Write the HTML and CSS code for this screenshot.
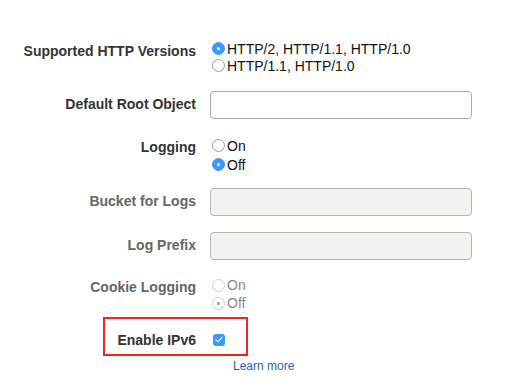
FILE: index.html
```html
<!DOCTYPE html>
<html lang="en">
<head>
  <meta charset="UTF-8" />
  <title>Distribution Settings</title>
  <link rel="stylesheet" href="styles.css">
</head>
<body>
  <form class="settings">
    <div class="row row-http">
      <label class="field-label">Supported HTTP Versions</label>
      <div class="choices">
        <label class="choice"><input type="radio" name="http" checked>HTTP/2, HTTP/1.1, HTTP/1.0</label>
        <label class="choice"><input type="radio" name="http">HTTP/1.1, HTTP/1.0</label>
      </div>
    </div>

    <div class="row row-input row-root">
      <label class="field-label">Default Root Object</label>
      <input class="text-input" type="text">
    </div>

    <div class="row row-logging">
      <label class="field-label">Logging</label>
      <div class="choices tall">
        <label class="choice"><input type="radio" name="logging">On</label>
        <label class="choice"><input type="radio" name="logging" checked>Off</label>
      </div>
    </div>

    <div class="row row-input row-bucket">
      <label class="field-label muted">Bucket for Logs</label>
      <input class="text-input" type="text" disabled>
    </div>

    <div class="row row-input row-prefix">
      <label class="field-label muted">Log Prefix</label>
      <input class="text-input" type="text" disabled>
    </div>

    <div class="row row-cookie">
      <label class="field-label muted">Cookie Logging</label>
      <div class="choices mid">
        <label class="choice disabled"><input type="radio" name="cookie" disabled>On</label>
        <label class="choice disabled"><input type="radio" name="cookie" checked disabled>Off</label>
      </div>
    </div>

    <div class="highlight">
      <label class="field-label">Enable IPv6</label>
      <input class="check" type="checkbox" checked>
    </div>

    <a class="learn-more" href="#">Learn more</a>
  </form>
</body>
</html>
```

FILE: styles.css
```css
:root {
  --label-color: #333;
  --muted-label: #666;
  --text-color: #111;
  --blue: #3b99fc;
  --border: #a9a9a9;
  --disabled-bg: #f3f2ef;
  --red: #ee2420;
  --link: #2a5fb4;
}
html, body {
  margin: 0;
  padding: 0;
  background: #fff;
  font-family: 'Liberation Sans', Arial, sans-serif;
  color: var(--text-color);
}
.settings {
  padding-top: 40px;
}
.row {
  display: flex;
  align-items: flex-start;
}
.field-label {
  width: 196px;
  text-align: right;
  font-weight: bold;
  font-size: 14px;
  color: var(--label-color);
  flex-shrink: 0;
}
.field-label.muted {
  color: var(--muted-label);
}
.choices {
  margin-left: 16px;
  display: flex;
  flex-direction: column;
}
.choice {
  display: flex;
  align-items: center;
  height: 17px;
  font-size: 14px;
}
.choices.tall .choice { height: 19px; }
.choices.mid .choice { height: 18px; }
.choice.disabled {
  color: #8a8a8a;
}
.choice input {
  appearance: none;
  -webkit-appearance: none;
  margin: 0 2px 0 0;
  width: 13px;
  height: 13px;
  border-radius: 50%;
  border: 1px solid #9e9e9e;
  background: #fff;
  box-sizing: border-box;
  position: relative;
}
.choice input:checked {
  background: var(--blue);
  border-color: var(--blue);
}
.choice input:checked::after {
  content: "";
  position: absolute;
  left: 4px; top: 4px;
  width: 3px; height: 3px;
  border-radius: 50%;
  background: #fff;
}
.choice input:disabled {
  border-color: #d0d0d0;
  background: #fff;
}
.choice input:disabled:checked::after {
  background: #999;
}
.row-http .field-label { line-height: 17px; padding-top: 3px; }
.row-logging .field-label,
.row-cookie .field-label { line-height: 19px; padding-top: 2px; }

.row-input {
  align-items: center;
}
.row-input .field-label {
  margin-top: -3px;
}
.text-input {
  margin: 0 0 0 14px;
  width: 262px;
  height: 28px;
  box-sizing: border-box;
  border: 1px solid var(--border);
  border-radius: 4px;
  background: #fff;
  font: 14px 'Liberation Sans', Arial, sans-serif;
  padding: 0 6px;
  outline: none;
}
.text-input:disabled {
  background: var(--disabled-bg);
  border-color: #b8b8b8;
}
.row-root { margin-top: 17px; }
.row-logging { margin-top: 17px; }
.row-bucket { margin-top: 14px; }
.row-prefix { margin-top: 16px; }
.row-cookie { margin-top: 16px; }

.highlight {
  margin: 5px 0 0 103px;
  width: 145px;
  height: 39px;
  box-sizing: border-box;
  border: 2px solid var(--red);
  display: flex;
  align-items: center;
}
.highlight .field-label {
  width: 91px;
  margin-top: 6px;
}
.check {
  appearance: none;
  -webkit-appearance: none;
  margin: 6px 0 0 17px;
  width: 12px;
  height: 12px;
  border-radius: 3px;
  background: var(--blue);
  position: relative;
}
.check::after {
  content: "";
  position: absolute;
  left: 4px; top: 1px;
  width: 3px; height: 6px;
  border: solid #fff;
  border-width: 0 1.5px 1.5px 0;
  transform: rotate(40deg);
}
.learn-more {
  display: block;
  margin: 2px 0 0 233px;
  font-size: 12px;
  line-height: 16px;
  color: var(--link);
  text-decoration: none;
}
```
